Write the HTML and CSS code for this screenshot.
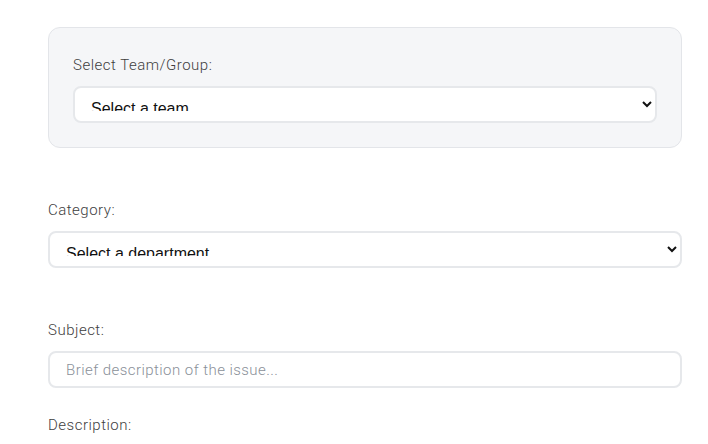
FILE: index.html
```html
<!DOCTYPE html>
<html lang="en">
<head>
<meta charset="utf-8">
<title>Support ticket</title>
<link rel="stylesheet" href="styles.css">
</head>
<body>
<form class="ticket-form">
  <div class="team-card">
    <label class="field-label" for="team">Select Team/Group:</label>
    <select id="team" class="field-select">
      <option>Select a team</option>
    </select>
  </div>

  <div class="field field-category">
    <label class="field-label" for="category">Category:</label>
    <select id="category" class="field-select">
      <option>Select a department</option>
    </select>
  </div>

  <div class="field field-subject">
    <label class="field-label" for="subject">Subject:</label>
    <input id="subject" class="field-input" type="text" placeholder="Brief description of the issue...">
  </div>

  <div class="field">
    <label class="field-label" for="description">Description:</label>
  </div>
</form>
</body>
</html>
```

FILE: styles.css
```css
html, body {
  margin: 0;
  padding: 0;
  background: #ffffff;
}

body {
  font-family: Roboto, "Liberation Sans", sans-serif;
  overflow: hidden;
}

.ticket-form {
  width: 634px;
  margin: 27px 0 0 48px;
  display: flex;
  flex-direction: column;
}

.team-card {
  background: #f5f6f8;
  border: 1px solid #e3e5e9;
  border-radius: 12px;
  padding: 24px;
  display: flex;
  flex-direction: column;
  margin-bottom: 49px;
}

.field {
  display: flex;
  flex-direction: column;
}

.field-category {
  margin-bottom: 49px;
}

.field-subject {
  margin-bottom: 24px;
}

.field-label {
  font-size: 15px;
  font-weight: 300;
  line-height: 24px;
  padding-top: 1px;
  color: #3e3e3e;
  margin-bottom: 9px;
  letter-spacing: 0.5px;
}

.field-select {
  box-sizing: border-box;
  width: 100%;
  height: 37px;
  padding: 11px 14px 10px 12px;
  border: 2px solid #e6e8eb;
  border-radius: 8px;
  background: #ffffff;
  font-family: "Liberation Sans", Arial, sans-serif;
  font-size: 16px;
  color: #111111;
  outline: none;
}

.field-input {
  box-sizing: border-box;
  width: 100%;
  height: 37px;
  padding: 0 16px;
  border: 2px solid #e6e8eb;
  border-radius: 8px;
  background: #ffffff;
  font-family: Roboto, "Liberation Sans", sans-serif;
  font-size: 15px;
  font-weight: 300;
  letter-spacing: 0.45px;
  color: #222222;
  outline: none;
}

.field-input::placeholder {
  color: #8a9099;
}
```
